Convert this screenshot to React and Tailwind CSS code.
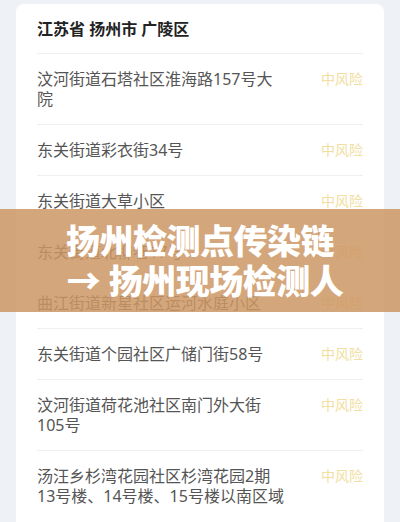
import React from 'react';

const rows = [
  '汶河街道石塔社区淮海路157号大院',
  '东关街道彩衣街34号',
  '东关街道大草小区',
  '东关街道北柳巷17号',
  '曲江街道新星社区运河水庭小区',
  '东关街道个园社区广储门街58号',
  '汶河街道荷花池社区南门外大街105号',
  '汤汪乡杉湾花园社区杉湾花园2期13号楼、14号楼、15号楼以南区域',
];

function Row({ text, last }) {
  return (
    <div className={`flex justify-between items-start py-[15px] ${last ? '' : 'border-b border-[#efefef]'}`}>
      <div className="w-[249px] text-[16px] leading-[20px] text-[#555555]">{text}</div>
      <div className="text-[14px] leading-[20px] text-[#f1dea0]">中风险</div>
    </div>
  );
}

export default function App() {
  return (
    <div
      className="relative w-[400px] h-[522px] overflow-hidden bg-[#eef1f5]"
      style={{ fontFamily: '"Noto Sans", "Noto Sans CJK SC", sans-serif' }}
    >
      <div className="mx-4 mt-1 bg-white rounded-lg px-[21px] pb-[10px]">
        <div className="pt-[13px] pb-3 text-[16px] leading-6 font-bold text-[#222222] border-b border-[#efefef]">
          江苏省 扬州市 广陵区
        </div>
        {rows.map((r, i) => (
          <Row key={i} text={r} last={i === rows.length - 1} />
        ))}
      </div>

      {/* title banner over the list */}
      <div className="absolute left-0 right-0 top-[209px] h-[103px] bg-[#cd9664]/85 flex flex-col items-center justify-center">
        <div className="text-white font-black text-[34px] leading-[40px] tracking-[-0.5px]">
          扬州检测点传染链
        </div>
        <div className="text-white font-black text-[34px] leading-[40px] tracking-[-0.5px] pl-[10px]">
          → 扬州现场检测人
        </div>
      </div>
    </div>
  );
}
